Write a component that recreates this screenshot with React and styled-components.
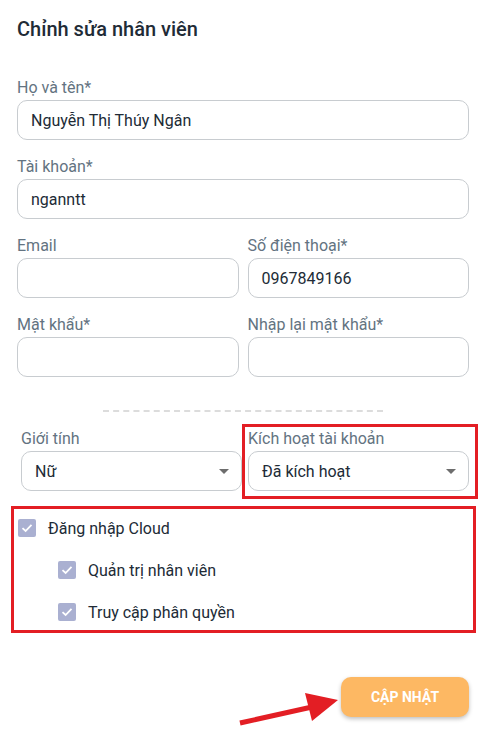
import React from 'react';
import styled, { createGlobalStyle } from 'styled-components';

const GlobalStyle = createGlobalStyle`
    html, body {
        margin: 0;
        padding: 0;
        background: #fff;
    }
    body {
        font-family: Roboto, "Noto Sans", "Liberation Sans", sans-serif;
    }
`;

const Page = styled.div`
    position: relative;
    width: 488px;
    height: 732px;
    box-sizing: border-box;
    padding: 17px 19px 0 17px;
    overflow: hidden;
`;

const Title = styled.h2`
    margin: 0 0 37px;
    font-size: 20px;
    line-height: 24px;
    font-weight: 500;
    color: #212b36;
`;

const Field = styled.div`
    position: relative;
    display: flex;
    flex-direction: column;
    margin-bottom: ${p => p.$last ? 0 : '17px'};
`;

const Label = styled.label`
    font-size: 16px;
    line-height: 20px;
    color: #637381;
    margin-bottom: 2px;
`;

const Input = styled.div`
    box-sizing: border-box;
    height: 40px;
    border: 1px solid #c8ccd0;
    border-radius: 10px;
    padding: 0 13px;
    display: flex;
    align-items: center;
    font-size: 16px;
    color: #212b36;
`;

const Select = styled(Input)`
    justify-content: space-between;
    padding: 0 12px 0 13px;
`;

const Caret = styled.span`
    width: 0;
    height: 0;
    border-left: 5px solid transparent;
    border-right: 5px solid transparent;
    border-top: 5px solid #6d6d6d;
`;

const Grid = styled.div`
    display: grid;
    grid-template-columns: 1fr 1fr;
    column-gap: ${p => p.$gap || '9px'};
    padding-left: ${p => p.$indent || '0'};
`;

const Divider = styled.div`
    width: 280px;
    margin: 33px auto 17px;
    border-top: 2px dashed #dcdcdc;
`;

const Highlight = styled.div`
    position: absolute;
    top: ${p => p.$t}px;
    left: ${p => p.$l}px;
    right: ${p => p.$r}px;
    bottom: ${p => p.$b}px;
    border: 3px solid #e31e24;
    pointer-events: none;
`;

const CheckGroup = styled.div`
    margin: 15px -7px 0 -6px;
    border: 3px solid #e31e24;
    padding: 1px 4px 0;
    display: flex;
    flex-direction: column;
    gap: 6px;
`;

const CheckRow = styled.div`
    height: 36px;
    display: flex;
    align-items: center;
    gap: 12px;
    padding-left: ${p => p.$sub ? '40px' : '0'};
    font-size: 16px;
    color: #212b36;
`;

const Box = styled.span`
    width: 18px;
    height: 18px;
    border-radius: 2px;
    background: #aab0d1;
    display: flex;
    align-items: center;
    justify-content: center;
`;

const Footer = styled.div`
    display: flex;
    justify-content: flex-end;
    margin-top: 44px;
`;

const Button = styled.button`
    width: 128px;
    height: 40px;
    border: none;
    border-radius: 10px;
    background: #fdb863;
    color: #fff;
    font-family: inherit;
    font-size: 14px;
    font-weight: 700;
    box-shadow: 0 2px 4px rgba(0, 0, 0, 0.25);
`;

const Arrow = styled.svg`
    position: absolute;
    left: 236px;
    top: 688px;
`;

const Check = () => (
    <Box>
        <svg width="12" height="10" viewBox="0 0 12 10">
            <path d="M1.5 5.2 L4.6 8 L10.5 1.8" fill="none" stroke="#fff" strokeWidth="1.8" />
        </svg>
    </Box>
);

const TextField = ({ label, value, last }) => (
    <Field $last={last}>
        <Label>{label}</Label>
        <Input>{value}</Input>
    </Field>
);

const SelectField = ({ label, value, children }) => (
    <Field $last>
        <Label>{label}</Label>
        <Select>
            <span>{value}</span>
            <Caret />
        </Select>
        {children}
    </Field>
);

const App = () => {
    return (
        <Page>
            <GlobalStyle />
            <Title>Chỉnh sửa nhân viên</Title>

            <TextField label="Họ và tên*" value="Nguyễn Thị Thúy Ngân" />
            <TextField label="Tài khoản*" value="nganntt" />

            <Grid>
                <TextField label="Email" value="" />
                <TextField label="Số điện thoại*" value="0967849166" />
                <TextField label="Mật khẩu*" value="" last />
                <TextField label="Nhập lại mật khẩu*" value="" last />
            </Grid>

            <Divider />

            <Grid $gap="6px" $indent="4px">
                <SelectField label="Giới tính" value="Nữ" />
                <SelectField label="Kích hoạt tài khoản" value="Đã kích hoạt">
                    <Highlight $t={-5} $l={-6} $r={-9} $b={-8} />
                </SelectField>
            </Grid>

            <CheckGroup>
                <CheckRow><Check />Đăng nhập Cloud</CheckRow>
                <CheckRow $sub><Check />Quản trị nhân viên</CheckRow>
                <CheckRow $sub><Check />Truy cập phân quyền</CheckRow>
            </CheckGroup>

            <Footer>
                <Button>CẬP NHẬT</Button>
            </Footer>

            <Arrow width="104" height="40" viewBox="0 0 104 40">
                <path d="M4 35 L76 19" stroke="#e31e24" strokeWidth="5" strokeLinecap="butt" />
                <path d="M69 5 L102 12 L76 33 Z" fill="#e31e24" />
            </Arrow>
        </Page>
    );
};

export default App;
